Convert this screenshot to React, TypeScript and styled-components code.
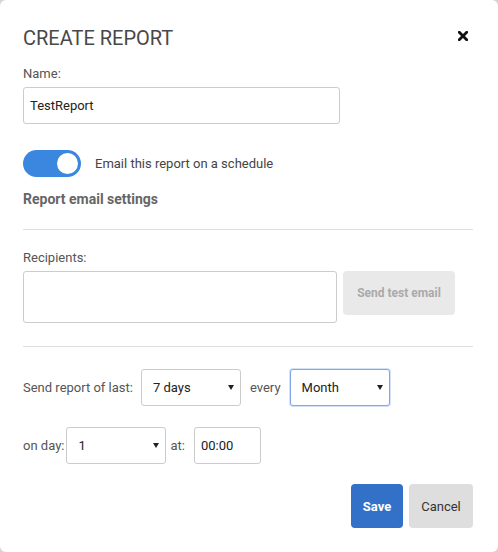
import React from "react";
import { styled, createGlobalStyle } from "styled-components";

const GlobalStyle = createGlobalStyle`
  html, body {
    margin: 0;
    padding: 0;
    background: #d4d4d4;
  }
  body {
    font-family: Roboto, "Liberation Sans", Arial, sans-serif;
  }
  * {
    box-sizing: border-box;
  }
`;

const Modal = styled.div`
  width: 498px;
  height: 552px;
  background: #fff;
  border-radius: 6px;
  padding: 26px 25px 24px 23px;
  display: flex;
  flex-direction: column;
`;

const Header = styled.div`
  display: flex;
  justify-content: space-between;
  align-items: center;
  height: 24px;
`;

const Title = styled.h2`
  margin: 0;
  font-size: 20px;
  line-height: 24px;
  font-weight: 400;
  color: #484848;
`;

const CloseButton = styled.button`
  border: none;
  background: none;
  padding: 0;
  margin-right: 5px;
  margin-top: -5px;
  width: 10px;
  height: 10px;
  display: flex;
  cursor: pointer;
`;

const Label = styled.label<{ $top?: number }>`
  display: block;
  margin-top: ${(p) => p.$top ?? 0}px;
  margin-bottom: 5px;
  font-size: 13px;
  line-height: 16px;
  color: #555;
`;

const TextInput = styled.input<{ $width: number; $height?: number }>`
  width: ${(p) => p.$width}px;
  height: ${(p) => p.$height ?? 37}px;
  border: 1px solid #ccc;
  border-radius: 3px;
  padding: 0 6px;
  font-family: inherit;
  font-size: 13px;
  color: #222;
  outline: none;
`;

const ToggleRow = styled.div`
  display: flex;
  align-items: center;
  gap: 14px;
  margin-top: 26px;
`;

const Track = styled.div<{ $on: boolean }>`
  width: 58px;
  height: 27px;
  border-radius: 14px;
  background: ${(p) => (p.$on ? "#3b86df" : "#ccc")};
  display: flex;
  align-items: center;
  justify-content: ${(p) => (p.$on ? "flex-end" : "flex-start")};
  padding: 0 3px;
`;

const Knob = styled.div`
  width: 21px;
  height: 21px;
  border-radius: 50%;
  background: #fff;
`;

const ToggleText = styled.span`
  font-size: 13px;
  color: #444;
`;

const SectionTitle = styled.h3`
  margin: 14px 0 0;
  font-size: 14px;
  line-height: 17px;
  font-weight: 700;
  color: #666;
`;

const Divider = styled.hr<{ $top: number }>`
  margin: ${(p) => p.$top}px 0 0;
  border: none;
  border-top: 1px solid #ddd;
  height: 0;
`;

const RecipientsRow = styled.div`
  display: flex;
  align-items: flex-start;
  gap: 6px;
`;

const Recipients = styled.textarea`
  width: 314px;
  height: 52px;
  border: 1px solid #ccc;
  border-radius: 3px;
  resize: none;
  outline: none;
  font-family: inherit;
  font-size: 13px;
`;

const Button = styled.button<{ $variant: "primary" | "default" | "disabled"; $width: number }>`
  width: ${(p) => p.$width}px;
  height: 44px;
  border: none;
  border-radius: 4px;
  padding: 0;
  white-space: nowrap;
  font-family: inherit;
  font-size: ${(p) => (p.$variant === "disabled" ? 12 : 13)}px;
  font-weight: ${(p) => (p.$variant === "default" ? 400 : 700)};
  background: ${(p) =>
    p.$variant === "primary" ? "#3370c8" : p.$variant === "default" ? "#dedede" : "#e9e9e9"};
  color: ${(p) =>
    p.$variant === "primary" ? "#fff" : p.$variant === "default" ? "#333" : "#aaa"};
  cursor: ${(p) => (p.$variant === "disabled" ? "default" : "pointer")};
`;

const ScheduleRow = styled.div<{ $top: number }>`
  display: flex;
  align-items: center;
  margin-top: ${(p) => p.$top}px;
`;

const InlineLabel = styled.span<{ $left?: number; $right: number }>`
  font-size: 13px;
  color: #555;
  margin-left: ${(p) => p.$left ?? 0}px;
  margin-right: ${(p) => p.$right}px;
`;

const SelectWrap = styled.div`
  position: relative;
  display: inline-flex;
`;

const Select = styled.select<{ $focused?: boolean }>`
  appearance: none;
  width: 100px;
  height: 37px;
  border: 1px solid ${(p) => (p.$focused ? "#7fa7ea" : "#ccc")};
  box-shadow: ${(p) => (p.$focused ? "0 0 0 1px rgba(127,167,234,0.35)" : "none")};
  border-radius: 3px;
  background: #fff;
  padding: 0 11px;
  font-family: inherit;
  font-size: 13px;
  color: #222;
  outline: none;
`;

const Caret = styled.span`
  position: absolute;
  right: 7px;
  top: 16px;
  width: 0;
  height: 0;
  border-left: 3.5px solid transparent;
  border-right: 3.5px solid transparent;
  border-top: 5px solid #222;
  pointer-events: none;
`;

const Footer = styled.div`
  display: flex;
  justify-content: flex-end;
  gap: 6px;
  margin-top: 20px;
`;

const Dropdown = ({
  value,
  options,
  focused,
}: {
  value: string;
  options: string[];
  focused?: boolean;
}) => (
  <SelectWrap>
    <Select defaultValue={value} $focused={focused}>
      {options.map((o) => (
        <option key={o}>{o}</option>
      ))}
    </Select>
    <Caret />
  </SelectWrap>
);

export default function App() {
  return (
    <>
      <GlobalStyle />
      <Modal>
        <Header>
          <Title>CREATE REPORT</Title>
          <CloseButton aria-label="Close">
            <svg width="10" height="10" viewBox="0 0 10 10">
              <path d="M1.3 1.3 L8.7 8.7 M8.7 1.3 L1.3 8.7" stroke="#111" strokeWidth="2.8" strokeLinecap="square" />
            </svg>
          </CloseButton>
        </Header>

        <Label $top={16}>Name:</Label>
        <TextInput $width={317} defaultValue="TestReport" />

        <ToggleRow>
          <Track $on>
            <Knob />
          </Track>
          <ToggleText>Email this report on a schedule</ToggleText>
        </ToggleRow>

        <SectionTitle>Report email settings</SectionTitle>
        <Divider $top={21} />

        <Label $top={20}>Recipients:</Label>
        <RecipientsRow>
          <Recipients />
          <Button $variant="disabled" $width={112}>
            Send test email
          </Button>
        </RecipientsRow>

        <Divider $top={23} />

        <ScheduleRow $top={22}>
          <InlineLabel $right={8}>Send report of last:</InlineLabel>
          <Dropdown value="7 days" options={["1 day", "7 days", "30 days"]} />
          <InlineLabel $left={9} $right={9}>
            every
          </InlineLabel>
          <Dropdown value="Month" options={["Day", "Week", "Month"]} focused />
        </ScheduleRow>

        <ScheduleRow $top={21}>
          <InlineLabel $right={2}>on day:</InlineLabel>
          <Dropdown value="1" options={["1", "2", "3"]} />
          <InlineLabel $left={4} $right={9}>
            at:
          </InlineLabel>
          <TextInput $width={67} defaultValue="00:00" />
        </ScheduleRow>

        <Footer>
          <Button $variant="primary" $width={52}>
            Save
          </Button>
          <Button $variant="default" $width={64}>
            Cancel
          </Button>
        </Footer>
      </Modal>
    </>
  );
}
